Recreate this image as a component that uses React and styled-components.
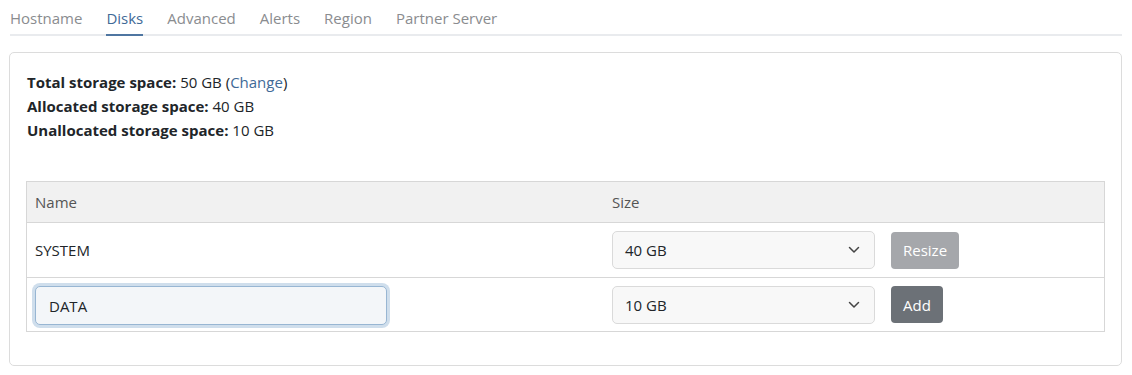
import React from "react";
import styled, { createGlobalStyle } from "styled-components";

const GlobalStyle = createGlobalStyle`
  body {
    margin: 0;
    background: #fff;
    font-family: "Open Sans", "Noto Sans", sans-serif;
    color: #212529;
  }
  * { box-sizing: border-box; }
`;

const Page = styled.div`
  padding: 0 10px 0 9px;
`;

const Tabs = styled.nav`
  display: flex;
  gap: 24px;
  margin-left: 1px;
  border-bottom: 2px solid #e9ebee;
  height: 36px;
`;

const Tab = styled.a`
  font-size: 15px;
  line-height: 20px;
  padding-top: 8px;
  color: ${(p) => (p.$active ? "#3f6a97" : "#8a8c8f")};
  border-bottom: 2px solid ${(p) => (p.$active ? "#4f76a1" : "transparent")};
  margin-bottom: -2px;
  cursor: pointer;
`;

const Card = styled.section`
  margin-top: 16px;
  border: 1px solid #dcdcdc;
  border-radius: 5px;
  padding: 17px 16px 33px 17px;
  height: 314px;
`;

const Stats = styled.div`
  font-size: 15px;
  line-height: 24px;
  margin-bottom: 39px;

  b { font-weight: 700; }
`;

const ChangeLink = styled.a`
  color: #3f6a97;
  cursor: pointer;
`;

const Table = styled.div`
  border: 1px solid #d7d7d7;
  margin-left: -1px;
`;

const Row = styled.div`
  display: grid;
  grid-template-columns: 585px 1fr;
  align-items: center;
  height: ${(p) => p.$h}px;
  background: ${(p) => (p.$head ? "#f1f1f1" : "#fff")};
  border-top: ${(p) => (p.$first ? "none" : "1px solid #d7d7d7")};
  font-size: 15px;
  color: ${(p) => (p.$head ? "#555" : "#212529")};
`;

const Cell = styled.div`
  padding-left: ${(p) => p.$pl ?? 8}px;
  display: flex;
  align-items: center;
  gap: 16px;
`;

const NameInput = styled.input`
  width: 352px;
  height: 39px;
  margin-top: 2px;
  border: 1px solid #98b6d3;
  border-radius: 5px;
  background: #f3f6f9;
  box-shadow: 0 0 0 3px #cfdeec;
  padding: 0 13px;
  font-family: inherit;
  font-size: 15px;
  color: #212529;
  outline: none;
`;

const Select = styled.div`
  width: 263px;
  height: 38px;
  border: 1px solid #dadada;
  border-radius: 5px;
  background: #f8f8f8;
  display: flex;
  align-items: center;
  justify-content: space-between;
  padding: 0 14px 0 12px;
  font-size: 15px;
`;

const Button = styled.button`
  height: 37px;
  padding: 0 12px;
  border: none;
  border-radius: 4px;
  font-family: inherit;
  font-size: 15px;
  color: #fff;
  background: ${(p) => (p.disabled ? "#a5a7ab" : "#6c7177")};
  opacity: 1;
`;

const Chevron = () => (
  <svg width="12" height="8" viewBox="0 0 12 8" fill="none">
    <path d="M1.5 1.5 6 6l4.5-4.5" stroke="#444" strokeWidth="1.5" strokeLinecap="round" strokeLinejoin="round" />
  </svg>
);

const tabs = ["Hostname", "Disks", "Advanced", "Alerts", "Region", "Partner Server"];

export default function App() {
  return (
    <>
      <GlobalStyle />
      <Page>
        <Tabs>
          {tabs.map((t) => (
            <Tab key={t} $active={t === "Disks"}>{t}</Tab>
          ))}
        </Tabs>
        <Card>
          <Stats>
            <div><b>Total storage space:</b> 50 GB (<ChangeLink>Change</ChangeLink>)</div>
            <div><b>Allocated storage space:</b> 40 GB</div>
            <div><b>Unallocated storage space:</b> 10 GB</div>
          </Stats>
          <Table>
            <Row $head $first $h={40}>
              <Cell>Name</Cell>
              <Cell $pl={0}>Size</Cell>
            </Row>
            <Row $h={55}>
              <Cell>SYSTEM</Cell>
              <Cell $pl={0}>
                <Select>40 GB <Chevron /></Select>
                <Button disabled>Resize</Button>
              </Cell>
            </Row>
            <Row $h={54}>
              <Cell>
                <NameInput defaultValue="DATA" />
              </Cell>
              <Cell $pl={0}>
                <Select>10 GB <Chevron /></Select>
                <Button>Add</Button>
              </Cell>
            </Row>
          </Table>
        </Card>
      </Page>
    </>
  );
}
